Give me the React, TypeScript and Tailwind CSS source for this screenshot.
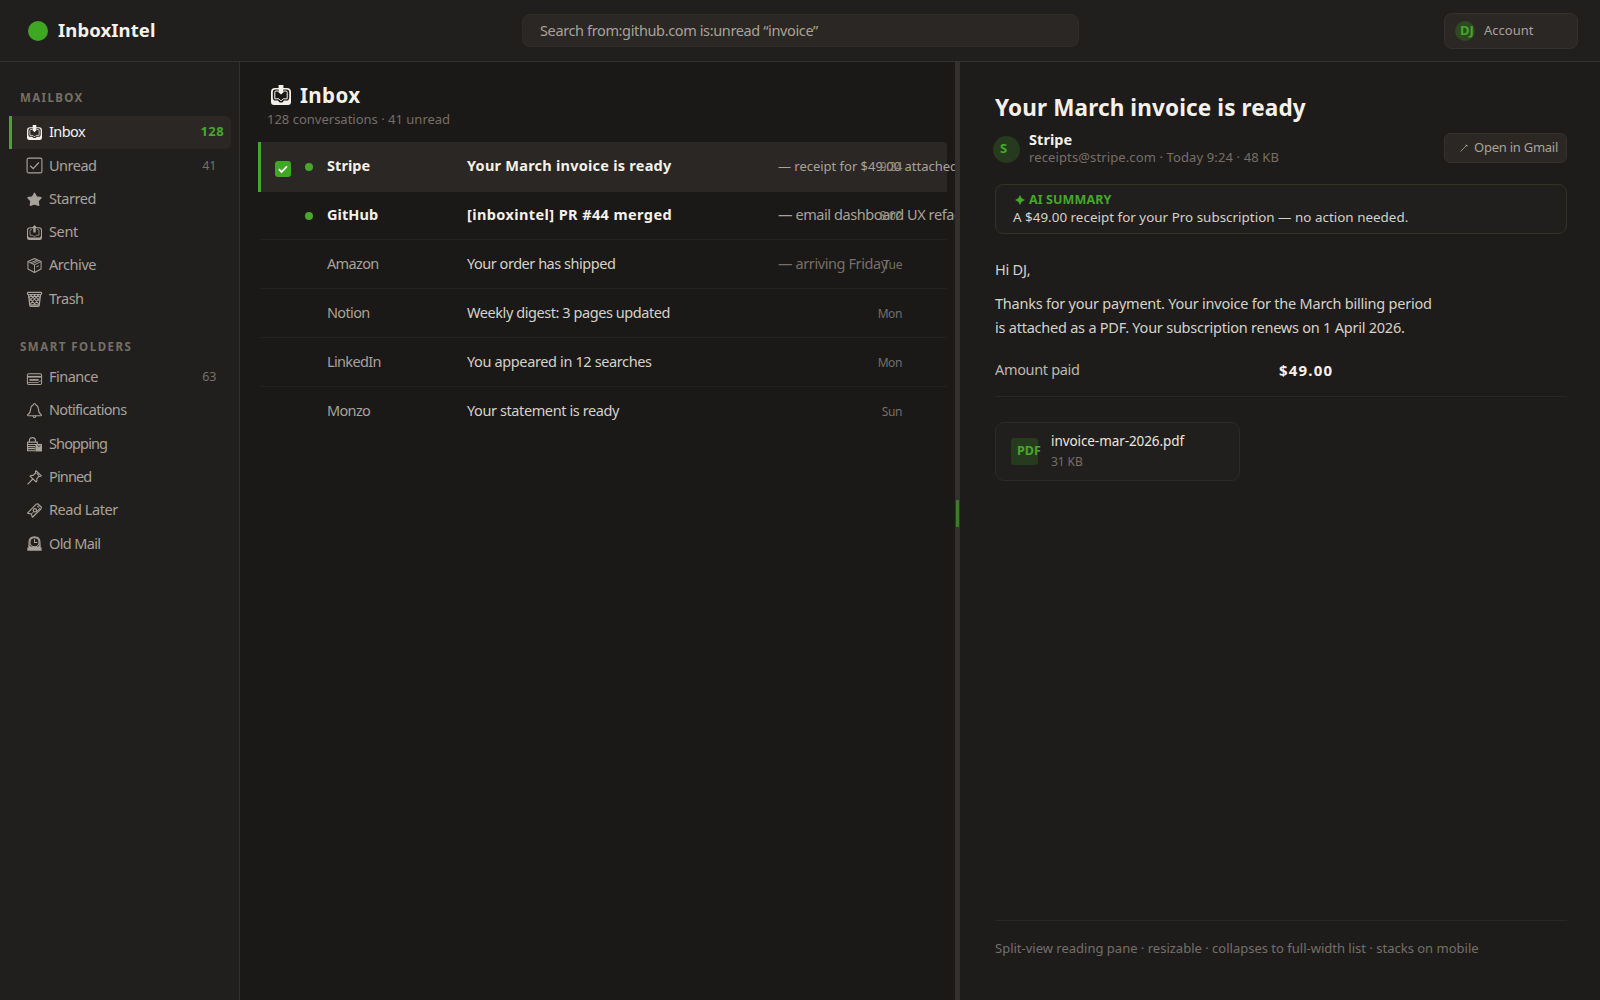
import React from "react";

interface IconProps {
  className?: string;
}

const TrayBody = () => (
  <>
    <path
      fillRule="evenodd"
      d="M4 3H16Q20 3 20 7V17Q20 20 17 20H3Q0 20 0 17V7Q0 3 4 3ZM4.2 4.4Q1.8 4.4 1.8 7V13.5L3 15.6H7L8.6 17.4H11.4L13 15.6H17L18.2 13.5V7Q18.2 4.4 15.8 4.4Z"
      fill="currentColor"
    />
    <path
      d="M7 6H5Q3.8 6 3.8 7.2V13.8H7.8L9.2 15.4H10.8L12.2 13.8H16.2V7.2Q16.2 6 15 6H13"
      fill="none"
      stroke="currentColor"
      strokeWidth="1"
    />
  </>
);

const InboxIcon = ({ className }: IconProps) => (
  <svg viewBox="0 0 20 20" className={className}>
    <TrayBody />
    <path d="M7.6 0H12.4V6.4H13.4L10 9.6L6.6 6.4H7.6Z" fill="currentColor" />
  </svg>
);

const SentIcon = ({ className }: IconProps) => (
  <svg viewBox="0 0 20 20" className={className}>
    <path
      fillRule="evenodd"
      d="M4 3H16Q20 3 20 7V17Q20 20 17 20H3Q0 20 0 17V7Q0 3 4 3ZM4.2 4.2Q1.4 4.2 1.4 7V14.5L3 16.6H17L18.6 14.5V7Q18.6 4.2 15.8 4.2Z"
      fill="currentColor"
    />
    <path
      d="M6.6 6.2H5Q4 6.2 4 7.2V13.6H7.4L8.8 15H11.2L12.6 13.6H16V7.2Q16 6.2 15 6.2H13.4"
      fill="none"
      stroke="currentColor"
      strokeWidth="1"
    />
    <path d="M8.4 10V4H6.3L10 0L13.7 4H11.6V10Z" fill="currentColor" />
  </svg>
);

const UnreadIcon = ({ className }: IconProps) => (
  <svg viewBox="0 0 16 16" className={className} fill="none" stroke="currentColor">
    <rect x="0.1" y="0.1" width="15.8" height="15.8" rx="1.6" strokeWidth="1.2" />
    <path d="M3.5 8.2L6.6 11.3L12.7 4.8" strokeWidth="1.4" />
  </svg>
);

const StarIcon = ({ className }: IconProps) => (
  <svg viewBox="0 0 16 16" className={className}>
    <path
      d="M8 1.4L10.2 5.3L15 6.1L11.8 9.7L12.5 14.2L8 12.6L3.5 14.2L4.2 9.7L1 6.1L5.8 5.3Z"
      fill="currentColor"
      stroke="currentColor"
      strokeWidth="1.4"
      strokeLinejoin="round"
    />
  </svg>
);

const ArchiveIcon = ({ className }: IconProps) => (
  <svg viewBox="0 0 16 16" className={className} fill="none" stroke="currentColor" strokeLinejoin="round">
    <path d="M8 0.6L15 3.8V11.8L8 15.4L1 11.8V3.8Z" strokeWidth="1.1" />
    <path d="M1 3.8L8 7.2L15 3.8M8 7.2V15.4M3.8 5.2L10.8 2M5.6 6.1L12.6 2.9" strokeWidth="1" />
    <path d="M10 9.5L12.6 8.2" strokeWidth="1" />
  </svg>
);

const TrashIcon = ({ className }: IconProps) => (
  <svg viewBox="0 0 16 16" className={className} fill="none" stroke="currentColor">
    <rect x="0.4" y="0.4" width="15.2" height="2.2" rx="0.8" strokeWidth="1.2" />
    <path d="M1.6 3L3 14.2Q3.2 15.3 4.4 15.3H11.6Q12.8 15.3 13 14.2L14.4 3" strokeWidth="1.3" />
    <path
      d="M4 3L8.5 8L12.5 13M7.6 3L13 9.2M2.6 6.5L9 13.6M11.2 3L14 6M12 3L7.5 8L3.5 13M8.4 3L3 9.2M13.4 6.5L7 13.6M4.8 3L2 6"
      strokeWidth="1.1"
    />
    <path d="M3 13.8H13" strokeWidth="1.4" />
  </svg>
);

const FinanceIcon = ({ className }: IconProps) => (
  <svg viewBox="0 0 16 16" className={className} fill="none" stroke="currentColor">
    <rect x="0.4" y="4" width="15.2" height="11.4" rx="1.6" strokeWidth="1.1" />
    <path d="M0.6 7.2H15.4" strokeWidth="1.8" />
    <path d="M2.6 10.6H12.4" strokeWidth="1.8" />
    <path d="M1 13.4H12L13.6 11.8H15.2" strokeWidth="0.9" />
  </svg>
);

const BellIcon = ({ className }: IconProps) => (
  <svg viewBox="0 0 16 16" className={className} fill="none" stroke="currentColor" strokeLinejoin="round">
    <path
      d="M6.9 1.8Q6.9 0.6 8 0.6Q9.1 0.6 9.1 1.8Q12 2.8 12.2 6.8Q12.4 11 15.2 12.4Q15.8 13.4 14.8 13.6H1.2Q0.2 13.4 0.8 12.4Q3.6 11 3.8 6.8Q4 2.8 6.9 1.8Z"
      strokeWidth="1.1"
    />
    <path d="M6.4 13.8Q6.6 15.4 8 15.4Q9.4 15.4 9.6 13.8" strokeWidth="1.1" />
  </svg>
);

const ShoppingIcon = ({ className }: IconProps) => (
  <svg viewBox="0 0 16 16" className={className} fill="none" stroke="currentColor">
    <path d="M2.6 5.4V4Q2.6 0.6 5.8 0.6Q9 0.6 9 4V5.4" strokeWidth="1.2" />
    <path d="M0.6 5.4H11V8M0.6 5.4V14.6H9" strokeWidth="1.2" />
    <path d="M0.6 8H10M0.6 10.2H8.6M0.6 12.4H8.6" strokeWidth="1.3" />
    <path d="M9 7.4H16V15.4H9Z" fill="currentColor" stroke="none" />
    <path d="M11 9Q12.5 11.4 14.4 9" stroke="#211f1d" strokeWidth="0.8" />
  </svg>
);

const PinIcon = ({ className }: IconProps) => (
  <svg viewBox="0 0 16 16" className={className} fill="none" stroke="currentColor" strokeLinejoin="round">
    <path
      d="M9.6 0.8L15.4 6.2Q14 7.4 12.8 6.6L10.4 9.4Q11 11.4 9.8 12.8L3.2 6.6Q4.6 5.4 6.6 5.8L9.2 3.2Q8.6 1.8 9.6 0.8Z"
      strokeWidth="1.2"
    />
    <path d="M6.2 9.6L0.6 15.4M10.2 3.4L12.8 6" strokeWidth="1.2" />
  </svg>
);

const BookmarkIcon = ({ className }: IconProps) => (
  <svg viewBox="0 0 16 16" className={className} fill="none" stroke="currentColor" strokeLinejoin="round">
    <path d="M11.4 0.8L15.4 4.4L14.8 6.4L5.8 15.2L4.6 11.8L0.6 10.8L9.6 1.4Z" strokeWidth="1.2" />
    <path d="M4.6 11.8L7 9.4M9.6 9.6L14 5.2" strokeWidth="1" />
    <circle cx="8.4" cy="7.8" r="1.8" strokeWidth="1.2" />
    <circle cx="12" cy="3.8" r="0.8" strokeWidth="0.9" />
  </svg>
);

const ClockIcon = ({ className }: IconProps) => (
  <svg viewBox="0 0 16 16" className={className} fill="none" stroke="currentColor">
    <path d="M2.2 12.5V7Q2.2 0.9 8 0.9Q13.8 0.9 13.8 7V12.5" strokeWidth="1.3" />
    <circle cx="8" cy="6.6" r="4.9" strokeWidth="1.2" />
    <path d="M8 3.4V7H11" strokeWidth="1.1" />
    <path
      fillRule="evenodd"
      d="M1.8 9Q3.6 11.8 8 11.8Q12.4 11.8 14.2 9V12.2H15.6V15.6H0.4V12.2H1.8Z"
      fill="currentColor"
      stroke="none"
    />
  </svg>
);

interface NavEntry {
  label: string;
  icon: (props: IconProps) => React.ReactElement;
  tracking: string;
  count?: string;
  active?: boolean;
}

const mailbox: NavEntry[] = [
  { label: "Inbox", icon: InboxIcon, tracking: "tracking-[-0.6px]", count: "128", active: true },
  { label: "Unread", icon: UnreadIcon, tracking: "tracking-[-0.5px]", count: "41" },
  { label: "Starred", icon: StarIcon, tracking: "tracking-[-0.45px]" },
  { label: "Sent", icon: SentIcon, tracking: "tracking-[-0.35px]" },
  { label: "Archive", icon: ArchiveIcon, tracking: "tracking-[-0.45px]" },
  { label: "Trash", icon: TrashIcon, tracking: "tracking-[-0.5px]" },
];

const smartFolders: NavEntry[] = [
  { label: "Finance", icon: FinanceIcon, tracking: "tracking-[-0.5px]", count: "63" },
  { label: "Notifications", icon: BellIcon, tracking: "tracking-[-0.68px]" },
  { label: "Shopping", icon: ShoppingIcon, tracking: "tracking-[-0.88px]" },
  { label: "Pinned", icon: PinIcon, tracking: "tracking-[-0.85px]" },
  { label: "Read Later", icon: BookmarkIcon, tracking: "tracking-[-0.44px]" },
  { label: "Old Mail", icon: ClockIcon, tracking: "tracking-[-0.65px]" },
];

const NavItem = ({ label, icon: Icon, tracking, count, active }: NavEntry) => (
  <li
    className={`flex h-[33.3px] items-center pr-[7px] ${
      active
        ? "rounded-r-md border-l-[3px] border-[#46a82a] bg-[#2b2724] pl-[15px] text-[#f5f1ea]"
        : "pl-[18px] text-[#a9a29a]"
    }`}
  >
    <Icon className="h-[15px] w-[15px] shrink-0 overflow-visible" />
    <span className={`ml-[7px] pb-px text-[14.5px] ${tracking}`}>{label}</span>
    {count && (
      <span
        className={
          active
            ? "ml-auto pb-px text-[13px] font-bold tracking-[0.4px] text-[#46a82a]"
            : "mr-2 ml-auto text-[12.5px] tracking-[-0.3px] text-[#756f68]"
        }
      >
        {count}
      </span>
    )}
  </li>
);

interface Mail {
  from: string;
  subject: string;
  subjectTracking: string;
  snippet?: string;
  snippetClass?: string;
  time: string;
  unread?: boolean;
  selected?: boolean;
}

const mails: Mail[] = [
  {
    from: "Stripe",
    subject: "Your March invoice is ready",
    subjectTracking: "tracking-[0.24px]",
    snippet: "— receipt for $49.00 attached",
    snippetClass: "pt-px text-[13px] tracking-[-0.02px] text-[#a9a29a]",
    time: "9:24",
    unread: true,
    selected: true,
  },
  {
    from: "GitHub",
    subject: "[inboxintel] PR #44 merged",
    subjectTracking: "tracking-[0.4px]",
    snippet: "— email dashboard UX refactor",
    snippetClass: "text-[14.5px] tracking-[-0.42px] text-[#a9a29a]",
    time: "8:02",
    unread: true,
  },
  {
    from: "Amazon",
    subject: "Your order has shipped",
    subjectTracking: "tracking-[-0.47px]",
    snippet: "— arriving Friday",
    snippetClass: "text-[14.5px] tracking-[-0.4px] text-[#756f68]",
    time: "Tue",
  },
  { from: "Notion", subject: "Weekly digest: 3 pages updated", subjectTracking: "tracking-[-0.43px]", time: "Mon" },
  { from: "LinkedIn", subject: "You appeared in 12 searches", subjectTracking: "tracking-[-0.37px]", time: "Mon" },
  { from: "Monzo", subject: "Your statement is ready", subjectTracking: "tracking-[-0.4px]", time: "Sun" },
];

const MailRow = ({ mail, last }: { mail: Mail; last: boolean }) => (
  <li
    className={`relative flex w-[689px] items-center border-l-[3px] whitespace-nowrap ${
      mail.selected
        ? "h-[49.6px] rounded-tr-[3px] border-[#46a82a] bg-[#2b2724] pb-px"
        : `h-[48.9px] border-b border-l-transparent pb-px ${last ? "border-b-transparent" : "border-b-[#242220]"}`
    }`}
  >
    <div className="ml-[14px] w-[30px] shrink-0 pt-[5px]">
      {mail.selected && (
        <div className="flex h-4 w-4 items-center justify-center rounded-[3px] bg-[#3fa822]">
          <svg viewBox="0 0 16 16" className="h-4 w-4">
            <path d="M3.8 8.2L6.6 10.9L12 5.3" fill="none" stroke="#fff" strokeWidth="1.8" />
          </svg>
        </div>
      )}
    </div>
    <div className="w-[22px] shrink-0 pt-px">
      {mail.unread && <div className="h-2 w-2 rounded-full bg-[#46a82a]" />}
    </div>
    <span
      className={`w-[140px] shrink-0 ${
        mail.unread
          ? "text-[14.5px] font-bold tracking-[0.05px] text-[#f5f1ea]"
          : "text-[14.5px] tracking-[-0.65px] text-[#a9a29a]"
      }`}
    >
      {mail.from}
    </span>
    <span
      className={`w-[311px] shrink-0 text-[14.5px] ${mail.subjectTracking} ${
        mail.unread ? "font-bold text-[#f5f1ea]" : "text-[#d6d1c9]"
      }`}
    >
      {mail.subject}
    </span>
    <span className={mail.snippetClass}>{mail.snippet}</span>
    {/* The timestamp sits on top of long snippets */}
    <span
      className={`absolute top-[15.5px] right-[45px] text-[12px] tracking-[-0.4px] ${
        mail.unread ? "text-[#8b847b]" : "text-[#756f68]"
      }`}
    >
      {mail.time}
    </span>
  </li>
);

const Header = () => (
  <header className="flex h-[62px] shrink-0 items-center border-b border-[#33302d] bg-[#211f1d]">
    <div className="flex w-[522px] items-center pl-7">
      <div className="h-5 w-5 rounded-full bg-[#3fa822]" />
      <span className="ml-[10px] pb-px text-[18.5px] font-bold tracking-[0.1px] text-[#f5f1ea]">InboxIntel</span>
    </div>
    <div className="flex h-[33px] w-[557px] items-center rounded-lg border border-[#302d29] bg-[#2b2724] pl-[17px] text-[14.5px] tracking-[-0.37px] text-[#a9a29a]">
      Search from:github.com is:unread “invoice”
    </div>
    <button className="mr-[22px] ml-auto flex h-9 w-[134px] items-center rounded-lg border border-[#35322e] bg-[#2b2724] pl-[10px]">
      <span className="flex h-5 w-5 items-center rounded-full bg-[#2d4a21] pl-[5px] text-[13px] font-bold text-[#46a82a]">
        DJ
      </span>
      <span className="ml-[9px] text-[13px] text-[#a9a29a]">Account</span>
    </button>
  </header>
);

const Sidebar = () => (
  <aside className="w-60 shrink-0 border-r border-[#33302d] bg-[#211f1d] pr-2 pl-[9px]">
    <h2 className="mt-[27px] mb-[9px] ml-[11px] text-[11.5px] leading-[18px] font-bold tracking-[1.4px] text-[#756f68]">
      MAILBOX
    </h2>
    <ul>
      {mailbox.map((entry) => (
        <NavItem key={entry.label} {...entry} />
      ))}
    </ul>
    <h2 className="mt-[22px] mb-[5px] ml-[11px] text-[11.5px] leading-[18px] font-bold tracking-[1.5px] text-[#756f68]">
      SMART FOLDERS
    </h2>
    <ul>
      {smartFolders.map((entry) => (
        <NavItem key={entry.label} {...entry} />
      ))}
    </ul>
  </aside>
);

const MailList = () => (
  <main className="w-[715px] shrink-0 overflow-hidden pl-[18px]">
    <div className="mt-[21px] flex h-6 items-center pl-[13px] text-[#f5f1ea]">
      <InboxIcon className="h-5 w-5" />
      <h1 className="ml-[9px] text-[20.5px] font-bold tracking-[0.4px]">Inbox</h1>
    </div>
    <p className="mt-[3px] mb-[14px] pl-[9px] text-[13px] leading-[18px] text-[#756f68]">128 conversations · 41 unread</p>
    <ul>
      {mails.map((mail, i) => (
        <MailRow key={mail.from} mail={mail} last={i === mails.length - 1} />
      ))}
    </ul>
  </main>
);

const ReadingPane = () => (
  <section className="flex flex-1 flex-col bg-[#1e1c1a] pr-[33px] pl-[35px]">
    <h1 className="mt-[30px] text-[22.5px] leading-[32px] font-bold tracking-[0.13px] text-[#f5f1ea]">
      Your March invoice is ready
    </h1>
    <div className="mt-[5px] flex h-[40px] items-center">
      <div className="-ml-0.5 flex h-[27px] w-[27px] items-center rounded-full bg-[#263a1d] pl-[7px] text-[13px] font-bold text-[#46a82a]">
        S
      </div>
      <div className="ml-[9px] pb-[3px]">
        <div className="text-[14.5px] leading-[18px] font-bold tracking-[0.05px] text-[#f5f1ea]">Stripe</div>
        <div className="text-[13px] leading-[18px] tracking-[0.12px] text-[#756f68]">
          receipts@stripe.com · Today 9:24 · 48 KB
        </div>
      </div>
      <button className="mb-[2px] ml-auto flex h-[30px] w-[123px] items-center rounded-md border border-[#35322e] bg-[#2b2724] pl-[15px] text-[13px] tracking-[-0.25px] text-[#a9a29a]">
        <svg viewBox="0 0 8 8" className="mr-[6px] h-2 w-2">
          <path d="M0.5 7.5L7 1M5.4 1.2H7V2.6" fill="none" stroke="currentColor" strokeWidth="0.8" />
        </svg>
        Open in Gmail
      </button>
    </div>
    <div className="mt-[15px] h-[50px] rounded-lg border border-[#2f3520] bg-[#211f1d] pt-[6px] pl-[17px]">
      <div className="flex items-center pl-[2px] text-[12.5px] leading-[18px] font-bold tracking-[0.1px] text-[#46a82a]">
        <svg viewBox="0 0 10 10" className="mr-[4px] h-[10px] w-[10px]">
          <path d="M5 0L6.7 3.3L10 5L6.7 6.7L5 10L3.3 6.7L0 5L3.3 3.3Z" fill="currentColor" />
        </svg>
        AI SUMMARY
      </div>
      <p className="text-[13.4px] leading-[16px] tracking-[0.02px] text-[#d6d1c9]">
        A $49.00 receipt for your Pro subscription — no action needed.
      </p>
    </div>
    <div className="mt-[23px] text-[14.5px] leading-[24.5px] tracking-[-0.23px] text-[#d6d1c9]">
      <p>Hi DJ,</p>
      <p className="mt-[9px]">
        Thanks for your payment. Your invoice for the March billing period
        <br />
        is attached as a PDF. Your subscription renews on 1 April 2026.
      </p>
    </div>
    <div className="mt-[6px] flex h-[51px] items-center border-b border-[#292724] pb-px text-[14.5px] tracking-[-0.33px] text-[#bdb7ae]">
      <span className="w-[284px]">Amount paid</span>
      <span className="text-[15px] font-bold tracking-[1.2px] text-[#f5f1ea]">$49.00</span>
    </div>
    <div className="mt-[25px] flex h-[59px] w-[245px] items-center rounded-[9px] border border-[#2d2a27] bg-[#211f1d] pl-[15px]">
      <div className="flex h-[27px] w-[27px] items-center rounded-[3px] bg-[#263a1d] pl-[6px] text-[12.5px] font-bold text-[#46a82a]">
        PDF
      </div>
      <div className="ml-[13px] pt-px">
        <div className="text-[13.5px] leading-[20px] tracking-[-0.08px] text-[#ebe6de]">invoice-mar-2026.pdf</div>
        <div className="text-[12px] leading-[21px] tracking-[-0.1px] text-[#756f68]">31 KB</div>
      </div>
    </div>
    <footer className="mt-auto mb-[42px] border-t border-[#292724] pt-[17px] text-[13px] leading-[20px] text-[#756f68]">
      Split-view reading pane · resizable · collapses to full-width list · stacks on mobile
    </footer>
  </section>
);

export default function App() {
  return (
    <div className="flex h-[1000px] w-[1600px] flex-col overflow-hidden bg-[#1a1917] font-['Noto_Sans',sans-serif]">
      <Header />
      <div className="flex min-h-0 flex-1">
        <Sidebar />
        <MailList />
        {/* Resize handle */}
        <div className="flex w-[5px] shrink-0 justify-center bg-[#33302d] pt-[438px]">
          <div className="h-[27px] w-[3px] bg-[#3f7a2c]" />
        </div>
        <ReadingPane />
      </div>
    </div>
  );
}
